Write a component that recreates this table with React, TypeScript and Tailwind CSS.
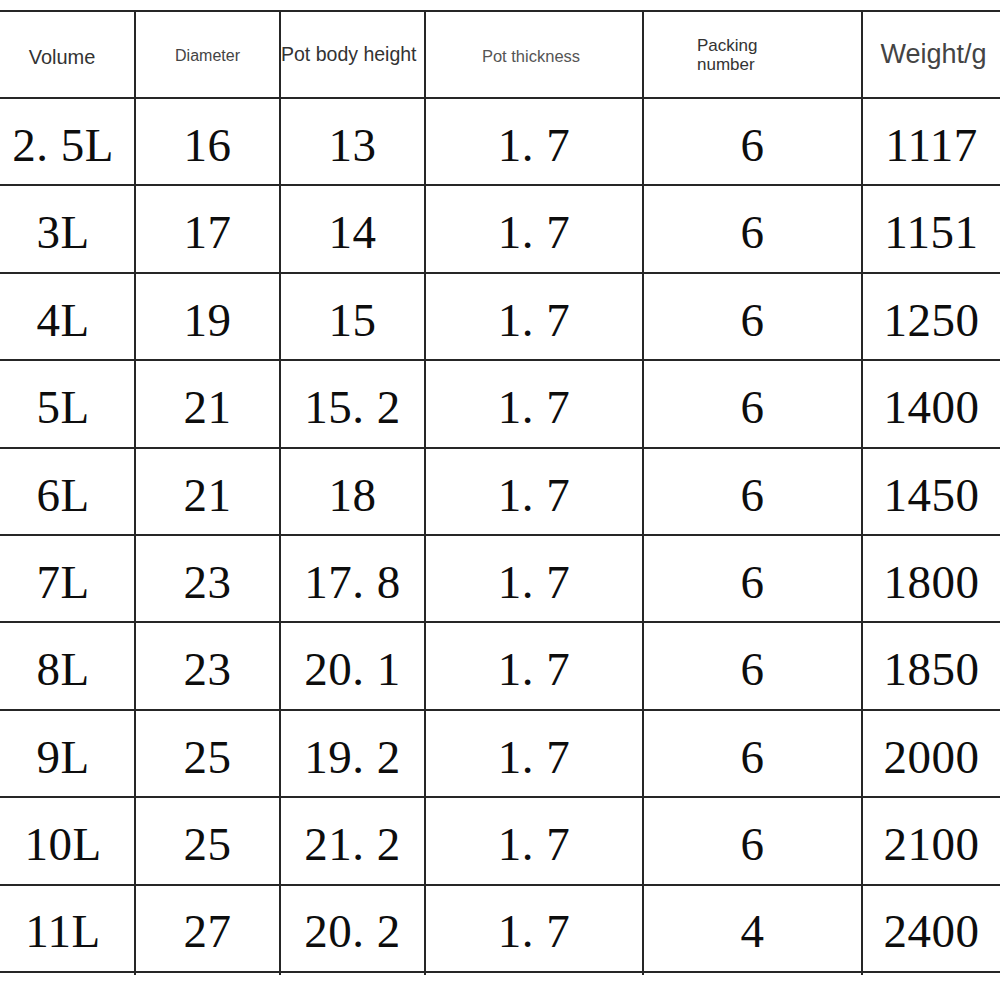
const cols = "grid grid-cols-[134px_145px_145px_218px_219px_139px]";

const rows: string[][] = [
  ["2. 5L", "16", "13", "1. 7", "6", "1117"],
  ["3L", "17", "14", "1. 7", "6", "1151"],
  ["4L", "19", "15", "1. 7", "6", "1250"],
  ["5L", "21", "15. 2", "1. 7", "6", "1400"],
  ["6L", "21", "18", "1. 7", "6", "1450"],
  ["7L", "23", "17. 8", "1. 7", "6", "1800"],
  ["8L", "23", "20. 1", "1. 7", "6", "1850"],
  ["9L", "25", "19. 2", "1. 7", "6", "2000"],
  ["10L", "25", "21. 2", "1. 7", "6", "2100"],
  ["11L", "27", "20. 2", "1. 7", "4", "2400"],
];

export default function App() {
  return (
    <div className="h-[1000px] w-[1000px] overflow-hidden bg-white pt-[10px] font-['Liberation_Sans',Arial,sans-serif]">
      <div className="border-t-2 border-[#262626]">
        {/* header */}
        <div className={`${cols} h-[87px] border-b-2 border-[#262626]`}>
          <div className="flex items-center justify-center pr-[10px] pt-[4px] text-[20px] text-[#333]">Volume</div>
          <div className="flex items-center justify-center border-l-2 border-[#262626] pt-[2px] text-[16px] text-[#444]">Diameter</div>
          <div className="flex items-center whitespace-nowrap border-l-2 border-[#262626] text-[19.5px] text-[#333]">Pot body height</div>
          <div className="flex items-center justify-center border-l-2 border-[#262626] pr-[6px] pt-[4px] text-[16.5px] text-[#555]">Pot thickness</div>
          <div className="flex items-center border-l-2 border-[#262626] pl-[53px] text-[17px] leading-[19px] text-[#333]">
            <div>
              Packing
              <br />
              number
            </div>
          </div>
          <div className="flex items-center justify-center border-l-2 border-[#262626] pl-[4px] text-[27px] text-[#444]">Weight/g</div>
        </div>

        {rows.map((r, i) => (
          <div key={i} className={`${cols} h-[87.4px] border-b-2 border-[#262626]`}>
            {r.map((v, j) => (
              <div
                key={j}
                className={`flex items-center justify-center whitespace-pre pt-[7px] font-['Liberation_Serif','Times_New_Roman',serif] text-[47px] tracking-[0.5px] text-[#0d0d0d] ${
                  j > 0 ? "border-l-2 border-[#262626]" : "pr-[8px]"
                }`}
              >
                {v}
              </div>
            ))}
          </div>
        ))}

        {/* little overhang of the vertical rules below the last line */}
        <div className={`${cols} h-[2px]`}>
          <div />
          <div className="border-l-2 border-[#262626]" />
          <div className="border-l-2 border-[#262626]" />
          <div className="border-l-2 border-[#262626]" />
          <div className="border-l-2 border-[#262626]" />
          <div className="border-l-2 border-[#262626]" />
        </div>
      </div>
    </div>
  );
}
